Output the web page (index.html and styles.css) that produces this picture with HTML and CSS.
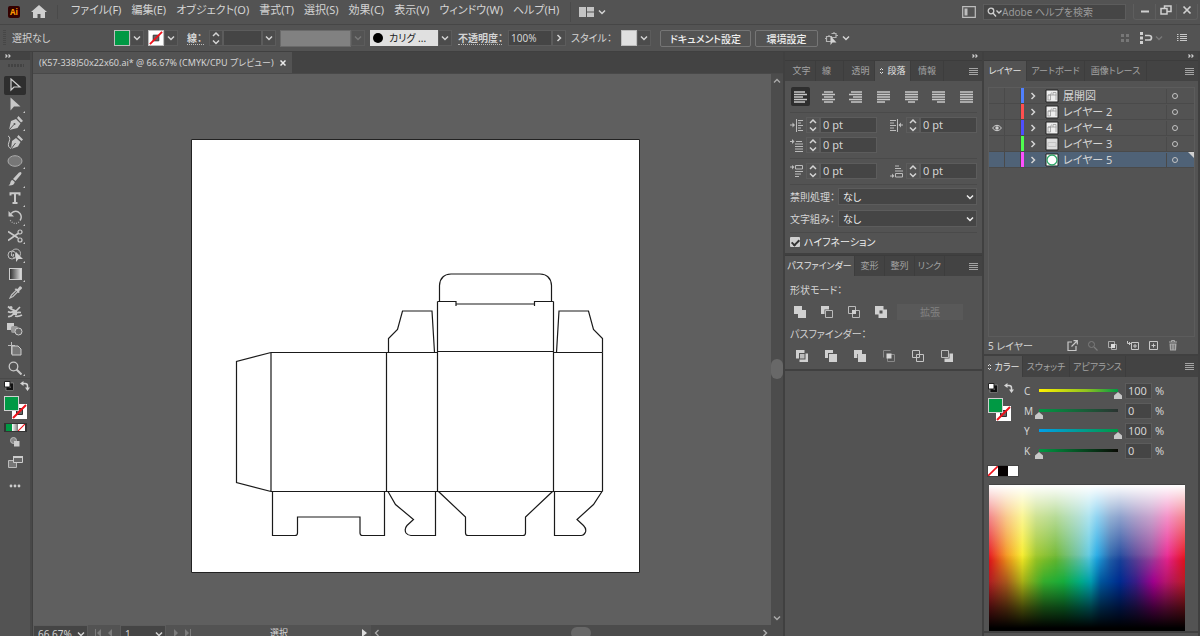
FILE: index.html
```
<!DOCTYPE html>
<html lang="ja">

<head>
    <meta charset="UTF-8">
    <meta name="viewport" content="width=device-width, initial-scale=1.0">
    <title>(K57-338)50x22x60.ai</title>
    <link rel="stylesheet" href="styles.css">
</head>

<body>
    <!-- shared icons -->
    <svg class="sprite" aria-hidden="true">
        <symbol id="down" viewBox="0 0 8 8"><path d="M1 2.5 4 5.5 7 2.5" fill="none" stroke="currentColor" stroke-width="1.5" /></symbol>
        <symbol id="right" viewBox="0 0 8 8"><path d="M2.5 1 5.5 4 2.5 7" fill="none" stroke="currentColor" stroke-width="1.5" /></symbol>
        <symbol id="left" viewBox="0 0 8 8"><path d="M5.5 1 2.5 4 5.5 7" fill="none" stroke="currentColor" stroke-width="1.3" /></symbol>
        <symbol id="up" viewBox="0 0 8 8"><path d="M1 5.5 4 2.5 7 5.5" fill="none" stroke="currentColor" stroke-width="1.3" /></symbol>
        <symbol id="spin" viewBox="0 0 8 14"><path d="M1 5 4 2 7 5M1 9.5 4 12.5 7 9.5" fill="none" stroke="currentColor" stroke-width="1.5" /></symbol>
        <symbol id="expand" viewBox="0 0 6 6"><path d="M.5 1.5 2 3 .5 4.500M3.500 1.500 5 3 3.500 4.500" fill="none" stroke="currentColor" stroke-width="1.2" /></symbol>
        <symbol id="menu" viewBox="0 0 9 9"><path d="M0 1.500h9M0 3.500h9M0 5.500h9M0 7.500h9" stroke="currentColor" stroke-width="1" /></symbol>
        <symbol id="updown" viewBox="0 0 5 8"><path d="M1 3 2.500 1.500 4 3M1 5 2.500 6.500 4 5" fill="none" stroke="currentColor" stroke-width="1" /></symbol>
        <symbol id="defaults" viewBox="0 0 10 10"><path d="M3.500 3.500h5v5h-5z" fill="none" stroke="#111" stroke-width="3" /><path d="M2 2h7.500v7.500H2z" fill="none" stroke="#aaa" stroke-width=".6" /><path d="M.5.5h5.500v5.500H.5z" fill="#fff" stroke="#222" /></symbol>
        <symbol id="swap" viewBox="0 0 10 10"><path d="M3 2.500h2q2.500 0 2.500 2.500v2" fill="none" stroke="currentColor" stroke-width="1.500" /><path d="M0 2.500 3.500 0v5zM7.500 10 5 6.500h5z" fill="currentColor" /></symbol>
        <symbol id="none" viewBox="0 0 15 15"><path d="M0 0h15v15H0z" fill="#fff" /><path d="M4.500 4.500h6v6h-6z" fill="#666" stroke="#333" /><path d="M1 14 14 1" stroke="#f0121b" stroke-width="2" /></symbol>
        <symbol id="none-small" viewBox="0 0 10 10"><path d="M0 0h10v10H0z" fill="#fff" /><path d="M0 10 10 0" stroke="#f0121b" stroke-width="1.600" /></symbol>
        <symbol id="box-thumb" viewBox="0 0 14 14"><path d="M1 1h12v12H1z" fill="#eee" stroke="#222" /><path d="M3 11V6h2.500v5M5.500 6l1-2.500M8 6V3.500h3V11M3 6h8.500M2.500 11h3" fill="none" stroke="#999" stroke-width=".8" /></symbol>
    </svg>

    <header class="menu-bar">
        <span class="app-logo">Ai</span>
        <a href="#" class="home" aria-label="ホーム">
            <svg width="16" height="14" viewBox="0 0 16 14"><path d="M8 0 0 7h2v6h4.500V9h3v4H14V7h2z" fill="#cfcfcf" /></svg>
        </a>
        <nav class="menus">
            <a href="#">ファイル(F)</a>
            <a href="#">編集(E)</a>
            <a href="#">オブジェクト(O)</a>
            <a href="#">書式(T)</a>
            <a href="#">選択(S)</a>
            <a href="#">効果(C)</a>
            <a href="#">表示(V)</a>
            <a href="#">ウィンドウ(W)</a>
            <a href="#">ヘルプ(H)</a>
        </nav>
        <button class="icon-btn layout-btn" aria-label="ドキュメントレイアウト">
            <svg width="15" height="10" viewBox="0 0 15 10"><path d="M0 0h7v10H0zM8 0h7v4.500H8zM8 5.500h7V10H8z" fill="#c4c4c4" /></svg>
            <svg width="8" height="8"><use href="#down" /></svg>
        </button>
        <div class="menu-right">
            <button class="icon-btn" aria-label="ワークスペース">
                <svg width="14" height="12" viewBox="0 0 14 12"><path d="M.7.7h12.600v10.600H.7z" fill="none" stroke="#bdbdbd" stroke-width="1.200" /><path d="M2.500 2.500h3v7h-3z" fill="#bdbdbd" /></svg>
            </button>
            <label class="help-search">
                <svg width="15" height="10" viewBox="0 0 15 10"><circle cx="4" cy="4" r="2.800" fill="none" stroke="#cfcfcf" stroke-width="1.300" /><path d="m6 6 3 3.500M9.500 3.500 12 6l2.500-2.500" fill="none" stroke="#cfcfcf" stroke-width="1.400" /></svg>
                <input type="text" placeholder="Adobe ヘルプを検索" aria-label="Adobe ヘルプを検索">
            </label>
            <div class="window-buttons">
                <button aria-label="最小化"><svg width="10" height="10" viewBox="0 0 10 10"><path d="M1 6.500h8" stroke="currentColor" stroke-width="2" /></svg></button>
                <button aria-label="元に戻す"><svg width="12" height="10" viewBox="0 0 12 10"><path d="M1 3.500h6v5.500H1zM4.500 3V1H11v5.500H7.500" fill="none" stroke="currentColor" stroke-width="1.500" /></svg></button>
                <button aria-label="閉じる"><svg width="10" height="10" viewBox="0 0 10 10"><path d="m1.500 1.500 7 7m0-7-7 7" stroke="currentColor" stroke-width="1.700" /></svg></button>
            </div>
        </div>
    </header>

    <section class="control-bar">
        <span class="grip"></span>
        <span class="selection">選択なし</span>
        <div class="combo">
            <button class="swatch green" aria-label="塗り"></button>
            <button class="drop" aria-label="塗りを選択"><svg width="8" height="8"><use href="#down" /></svg></button>
        </div>
        <div class="combo stroke-combo">
            <button class="swatch" aria-label="線"><svg width="14" height="14"><use href="#none" /></svg></button>
            <button class="drop" aria-label="線を選択"><svg width="8" height="8"><use href="#down" /></svg></button>
        </div>
        <div class="combo weight">
            <label class="dotted" for="strokeWeight">線：</label>
            <button class="drop" aria-label="増減"><svg width="8" height="14"><use href="#spin" /></svg></button>
            <input type="text" id="strokeWeight">
            <button class="drop" aria-label="線幅"><svg width="8" height="8"><use href="#down" /></svg></button>
        </div>
        <div class="combo profile">
            <button class="profile-box" aria-label="可変線幅プロファイル" disabled></button>
            <button class="drop faded" aria-label="プロファイルを選択" disabled><svg width="8" height="8"><use href="#down" /></svg></button>
        </div>
        <div class="combo brush">
            <button class="brush-box"><i></i>カリグ ...</button>
            <button class="drop" aria-label="ブラシを選択"><svg width="8" height="8"><use href="#down" /></svg></button>
        </div>
        <div class="combo opacity">
            <label class="dotted" for="opacity">不透明度：</label>
            <input type="text" id="opacity" value="100%">
            <button class="drop" aria-label="不透明度を選択"><svg width="8" height="8"><use href="#right" /></svg></button>
        </div>
        <div class="combo graphic-style">
            <span class="style-label">スタイル：</span>
            <button class="swatch pale" aria-label="グラフィックスタイル"></button>
            <button class="drop" aria-label="スタイルを選択"><svg width="8" height="8"><use href="#down" /></svg></button>
        </div>
        <button class="outline-btn doc-setup">ドキュメント設定</button>
        <button class="outline-btn prefs">環境設定</button>
        <button class="icon-btn similar" aria-label="類似オブジェクトを選択">
            <svg width="13" height="13" viewBox="0 0 13 13"><path d="M1.500 4.500h5v5h-5zM7 1.500h4v4H7M0 6.500h1M4 3v1.500M9 0v1.500M11 3.500h2M6.500 1.500H8" fill="none" stroke="#b4b4b4" stroke-width="1.200" /><path d="M5.500 4v9l2-2.500h4z" fill="#d4d4d4" /></svg>
            <svg width="8" height="8"><use href="#down" /></svg>
        </button>
        <div class="control-right">
            <svg width="10" height="10" viewBox="0 0 10 10"><path d="M1 1h3v3H1zM6 1h3v3H6zM1 6h3v3H1zM6 6h3v3H6z" fill="#777" /></svg>
            <button class="icon-btn snap" aria-label="スナップ">
                <svg width="13" height="12" viewBox="0 0 13 12"><path d="M0 0h3v3H0zM0 4.500h3v3H0zM0 9h3v3H0z" fill="#d0d0d0" /><path d="M5 3.500h4q2.500 0 2.500 2.300T9 8H5" fill="none" stroke="#d0d0d0" stroke-width="1.700" /></svg>
                <svg class="faded" width="8" height="8"><use href="#down" /></svg>
            </button>
            <button class="icon-btn" aria-label="コントロールメニュー">
                <svg width="10" height="8" viewBox="0 0 10 8"><path d="M0 .5h1.500M3 .5h7M0 2.500h1.500M3 2.500h7M0 4.500h1.500M3 4.500h7M0 6.500h1.500M3 6.500h7" stroke="#c8c8c8" stroke-width="1" /></svg>
            </button>
        </div>
    </section>

    <main class="workspace">
        <aside class="tools">
            <div class="collapse tools-head"><svg width="6" height="6"><use href="#expand" /></svg></div>
            <span class="tools-grip"></span>
            <div class="tool-list">
                <button class="active" aria-label="選択ツール"><svg width="14" height="14" viewBox="0 0 14 14"><path d="M3 1v11l3-3h6z" fill="none" stroke="#d0d0d0" stroke-width="1.200" /></svg></button>
                <button class="more" aria-label="ダイレクト選択ツール"><svg width="14" height="14" viewBox="0 0 14 14"><path d="M2.500.5v13l3.500-4h6.500z" fill="#c8c8c8" /></svg></button>
                <button class="more" aria-label="ペンツール"><svg width="15" height="14" viewBox="0 0 15 14"><path d="M8 3 12.500 7.500 9.500 12 1 14l2-9zM9 2l1.500-2L15 5l-2 1.500z" fill="#c8c8c8" /><path d="m1 14 5-5.500" stroke="#535353" /><circle cx="6.500" cy="8" r="1" fill="#535353" /></svg></button>
                <button aria-label="曲線ツール"><svg width="16" height="14" viewBox="0 0 16 14"><path d="m9 3 4.500 4-2.500 4.500L4 14l1-8zM10 2l1.500-2L16 4.500 14.500 6z" fill="#c8c8c8" /><path d="m4 14 4.500-6" stroke="#535353" /><path d="M1 1q3 1 1 6-2 5 2 6.500" fill="none" stroke="#c8c8c8" /></svg></button>
                <button class="more" aria-label="楕円形ツール"><svg width="16" height="12" viewBox="0 0 16 12"><ellipse cx="8" cy="6" rx="7" ry="5.300" fill="#777" stroke="#aaa" /></svg></button>
                <button class="more" aria-label="ブラシツール"><svg width="14" height="14" viewBox="0 0 14 14"><path d="M13 0q1 1 0 2.500L7.500 9 5 7l6-6.500zM4.500 8l2.300 2Q6 14 .5 13.500 2.500 12 2.500 10q.5-2 2-2z" fill="#c8c8c8" /></svg></button>
                <button class="more" aria-label="文字ツール"><svg width="12" height="12" viewBox="0 0 12 12"><path d="M1.500 3.500V1.200h9v2.300M6 1v10M3.500 11h5" fill="none" stroke="#c8c8c8" stroke-width="2" /></svg></button>
                <button class="more" aria-label="回転ツール"><svg width="15" height="14" viewBox="0 0 15 14"><path d="M3 3.500Q8-1 12 3.500q2.500 3.500 0 7" fill="none" stroke="#c8c8c8" stroke-width="1.400" /><path d="M.5 1v5.500H6z" fill="#c8c8c8" /><path d="M11 12q-5 3.500-9-2" fill="none" stroke="#aaa" stroke-width="1.200" stroke-dasharray="1 1.300" /></svg></button>
                <button class="more" aria-label="はさみツール"><svg width="15" height="14" viewBox="0 0 15 14"><path d="M0 2.500 10 9M0 11.500 10 4.500" stroke="#c8c8c8" stroke-width="1.600" /><circle cx="12" cy="3" r="2" fill="none" stroke="#c8c8c8" stroke-width="1.200" /><circle cx="12" cy="11" r="2" fill="none" stroke="#c8c8c8" stroke-width="1.200" /></svg></button>
                <button class="more" aria-label="シェイプ形成ツール"><svg width="16" height="14" viewBox="0 0 16 14"><circle cx="5" cy="7" r="4" fill="none" stroke="#bbb" /><circle cx="9" cy="5.500" r="4.500" fill="none" stroke="#bbb" /><path d="M4 7h5" stroke="#bbb" stroke-width="2" stroke-dasharray="1 1" /><path d="M9 4v10l2.500-3H16z" fill="#d0d0d0" /></svg></button>
                <button class="more" aria-label="グラデーションツール"><span class="gradient-icon"></span></button>
                <button aria-label="スポイトツール"><svg width="13" height="13" viewBox="0 0 13 13"><path d="M2.500 9 8 3.500 9.500 5 4 10.500 1 12z" fill="none" stroke="#c0c0c0" stroke-width="1.200" /><path d="M7 2.500 8.500 3l2-2.500q1-.5 2 .5t0 2l-2.300 2 .3 1.500-1 .5-4-4z" fill="#c8c8c8" /></svg></button>
                <button aria-label="パペットワープツール"><svg width="16" height="13" viewBox="0 0 16 13"><path d="M1 1.500 4 4l5 2 4-4M1 6.500q3 2 7-1M1 11.500q3 .5 5-2t8-2M8 11q3 1 7-1" fill="none" stroke="#c8c8c8" stroke-width="1.700" /><circle cx="4" cy="2.500" r="1.500" fill="#c8c8c8" /><path d="M5 6h5v4H6z" fill="#c8c8c8" /></svg></button>
                <button aria-label="ブレンドツール"><svg width="16" height="13" viewBox="0 0 16 13"><path d="M0 0h7v7H0z" fill="#ccc" /><rect x="4" y="3" width="7" height="7" rx="2" fill="#999" /><circle cx="11.500" cy="8.500" r="3.500" fill="#666" stroke="#ccc" /></svg></button>
                <button aria-label="アートボードツール"><svg width="15" height="14" viewBox="0 0 15 14"><path d="M0 3.500h7M3.500 0v12" stroke="#bbb" /><path d="M4 4h6l3 3v6H4z" fill="#777" stroke="#ccc" /></svg></button>
                <button class="more" aria-label="ズームツール"><svg width="14" height="14" viewBox="0 0 14 14"><circle cx="5.500" cy="5.500" r="4.300" fill="none" stroke="#c8c8c8" stroke-width="1.300" /><path d="m8.500 8.500 5 5" stroke="#c8c8c8" stroke-width="2" /></svg></button>
            </div>
            <div class="paint">
                <div class="paint-top">
                    <svg width="10" height="10"><use href="#defaults" /></svg>
                    <svg width="10" height="10"><use href="#swap" /></svg>
                </div>
                <div class="fill-stroke">
                    <svg class="fs-stroke" width="15" height="15"><use href="#none" /></svg>
                    <span class="fs-fill"></span>
                </div>
            </div>
            <div class="paint-modes"><span class="m-color"></span><span class="m-grad"></span><svg width="7" height="7"><use href="#none-small" /></svg></div>
            <div class="tool-foot">
                <svg width="10" height="10" viewBox="0 0 10 10"><circle cx="3.500" cy="3.500" r="3" fill="#888" stroke="#bbb" /><path d="M4 4h5.500v5.500H4z" fill="#ccc" /></svg>
                <svg width="15" height="12" viewBox="0 0 15 12"><path d="M.5 4.500h8v7h-8z" fill="#777" stroke="#bbb" /><path d="M5.500.5h9v6h-9z" fill="#666" stroke="#ccc" /><path d="M5 1h10" stroke="#ccc" stroke-width="2" /></svg>
                <svg width="12" height="4" viewBox="0 0 12 4"><circle cx="2" cy="2" r="1.400" fill="#ccc" /><circle cx="6" cy="2" r="1.400" fill="#ccc" /><circle cx="10" cy="2" r="1.400" fill="#ccc" /></svg>
            </div>
        </aside>

        <section class="document">
            <div class="doc-tabs">
                <div class="doc-tab">
                    <span>(K57-338)50x22x60.ai* @ 66.67% (CMYK/CPU プレビュー)</span>
                    <button aria-label="閉じる"><svg width="6" height="6" viewBox="0 0 6 6"><path d="m.5.5 5 5m0-5-5 5" stroke="#ececec" stroke-width="1.500" /></svg></button>
                </div>
            </div>
            <div class="view">
                <div class="canvas">
                    <svg class="artboard" width="449" height="434" viewBox="191 139 449 434">
                        <path d="M191.500 139.500h448v433h-448z" fill="#fff" stroke="#222" />
                        <g fill="none" stroke="#1a1a1a" stroke-width="1.200">
                            <path d="M271 352.500 236.500 361.500V482.500L271 491.500M271 352.500V491.500M386.500 352.500V491.500M437.500 301.500V491.500M553.500 301.500V491.500M602.500 352.500V491.500" />
                            <path d="M271 352.500H437.500M437.500 351.500H553.500M553.500 352.500H602.500M271 491.500H602.500" />
                            <path d="M388.500 352.500V338.500L397.500 329.500 402.500 311H432L434.500 352.500M556.500 352.500 559 311H588.500L593.500 329.500 602.500 338.500V352.500" />
                            <path d="M439.500 301.500V285.500Q440 274.500 451 274H540Q551 274.500 551.500 285.500V301.500M437.500 301.500H456V306M456 304H534.500M534.500 306V301.500H553.500" />
                            <path d="M272.500 491.500V535.500H295Q297.500 535.500 297.500 533V517H360V533Q360 535.500 362.500 535.500H384.500V491.500" />
                            <path d="M388 491.500 395.500 504.500 413.500 519.500 407 525.500Q404 529 406 533 408 535.500 411 535.500H435.500V491.500" />
                            <path d="M438.500 491.500 465.500 517V533Q465.500 535.500 468 535.500H523Q525.500 535.500 525.500 533V517L552.500 491.500" />
                            <path d="M554.500 491.500V535.500H581Q584 535.500 585.500 532 586.500 528.500 583.500 525.500L577 519.500 593.500 504.500 602 491.500" />
                        </g>
                    </svg>
                </div>
                <div class="v-scroll">
                    <svg width="8" height="8"><use href="#up" /></svg>
                    <span class="v-thumb"></span>
                    <svg width="8" height="8"><use href="#down" /></svg>
                </div>
            </div>
            <footer class="status">
                <div class="status-row">
                    <span class="select zoom-level"><select aria-label="ズーム"><option>66.67%</option></select><svg width="8" height="8"><use href="#down" /></svg></span>
                    <svg class="nav-icon" width="20" height="8" viewBox="0 0 20 8"><path d="M1 0h1v8H1zM7 0v8L3 4zM18 0v8l-4-4z" fill="#7c7c7c" /></svg>
                    <span class="select page-no"><select aria-label="アートボード"><option>1</option></select><svg width="8" height="8"><use href="#down" /></svg></span>
                    <svg class="nav-icon" width="20" height="8" viewBox="0 0 20 8"><path d="M2 0v8l4-4zM13 0v8l4-4zM18 0h1v8h-1z" fill="#7c7c7c" /></svg>
                    <span class="tool-name">選択</span>
                    <svg class="play" width="5" height="8" viewBox="0 0 5 8"><path d="M0 0v8l5-4z" fill="#ddd" /></svg>
                    <div class="h-scroll">
                        <svg width="8" height="8"><use href="#left" /></svg>
                        <span class="h-thumb"></span>
                        <svg width="8" height="8"><use href="#right" /></svg>
                    </div>
                </div>
            </footer>
        </section>

        <aside class="dock dock-left">
            <div class="collapse"><svg width="6" height="6"><use href="#expand" /></svg></div>
            <section class="panel">
                <div class="tabs">
                    <button class="t-char">文字</button>
                    <button class="t-line">線</button>
                    <button class="t-opacity">透明</button>
                    <button class="on t-para"><svg width="5" height="8"><use href="#updown" /></svg>段落</button>
                    <button class="t-info">情報</button>
                    <button class="panel-menu" aria-label="メニュー"><svg width="9" height="9"><use href="#menu" /></svg></button>
                </div>
                <div class="para-body">
                    <div class="aligns">
                        <button class="on" aria-label="左揃え"><svg width="13" height="12" viewBox="0 0 13 12"><path d="M0 1h11M0 3.500h13M0 6h9M0 8.500h13M0 11h11" /></svg></button>
                        <button aria-label="中央揃え"><svg width="13" height="12" viewBox="0 0 13 12"><path d="M2 1h9M0 3.500h13M2 6h9M0 8.500h13M2 11h9" /></svg></button>
                        <button aria-label="右揃え"><svg width="13" height="12" viewBox="0 0 13 12"><path d="M2 1h11M0 3.500h13M4 6h9M0 8.500h13M2 11h11" /></svg></button>
                        <button aria-label="均等配置(最終行左揃え)"><svg width="13" height="12" viewBox="0 0 13 12"><path d="M0 1h13M0 3.500h13M0 6h13M0 8.500h13M0 11h8" /></svg></button>
                        <button aria-label="均等配置(最終行中央揃え)"><svg width="13" height="12" viewBox="0 0 13 12"><path d="M0 1h13M0 3.500h13M0 6h13M0 8.500h13M3 11h7" /></svg></button>
                        <button aria-label="均等配置(最終行右揃え)"><svg width="13" height="12" viewBox="0 0 13 12"><path d="M0 1h13M0 3.500h13M0 6h13M0 8.500h13M5 11h8" /></svg></button>
                        <button aria-label="両端揃え"><svg width="13" height="12" viewBox="0 0 13 12"><path d="M0 1h13M0 3.500h13M0 6h13M0 8.500h13M0 11h13" /></svg></button>
                    </div>
                    <div class="indents">
                        <div class="field">
                            <svg width="13" height="13" viewBox="0 0 13 13"><path d="M0 6h4M6.500 0v13M8 1.500h5M8 4h3M8 6.500h5M8 9h3M8 11.500h5" /><path d="M2.500 3.500 5 6 2.500 8.500z" class="tip" /></svg>
                            <button aria-label="増減"><svg width="8" height="14"><use href="#spin" /></svg></button><input type="text" value="0 pt" aria-label="左インデント">
                        </div>
                        <div class="field">
                            <svg width="13" height="13" viewBox="0 0 13 13"><path d="M9 6h4M7.500 0v13M0 1.500h6M0 4h4M0 6.500h6M0 9h4M0 11.500h6" /><path d="M11 3.500 8.500 6 11 8.500z" class="tip" /></svg>
                            <button aria-label="増減"><svg width="8" height="14"><use href="#spin" /></svg></button><input type="text" value="0 pt" aria-label="右インデント">
                        </div>
                        <div class="field">
                            <svg width="13" height="13" viewBox="0 0 13 13"><path d="M0 2.500h3M6 2.500h6M5 5h8M5 7.500h8M5 10h8M5 12.500h8" /><path d="M2 0 4.500 2.500 2 5z" class="tip" /></svg>
                            <button aria-label="増減"><svg width="8" height="14"><use href="#spin" /></svg></button><input type="text" value="0 pt" aria-label="1行目左インデント">
                        </div>
                    </div>
                    <div class="indents">
                        <div class="field">
                            <svg width="13" height="13" viewBox="0 0 13 13"><path d="M0 2h3M5.500 .5h7v3.500h-7zM5 6.500h8M5 9h6M5 11.500h4" /><path d="M2 0 4.500 2 2 4.500z" class="tip" /></svg>
                            <button aria-label="増減"><svg width="8" height="14"><use href="#spin" /></svg></button><input type="text" value="0 pt" aria-label="段落前のアキ">
                        </div>
                        <div class="field">
                            <svg width="13" height="13" viewBox="0 0 13 13"><path d="M0 11h3M5.500 8.500h7v3.500h-7zM5 1h4M5 3.500h6M5 6h8" /><path d="M2 8.500 4.500 11 2 13z" class="tip" /></svg>
                            <button aria-label="増減"><svg width="8" height="14"><use href="#spin" /></svg></button><input type="text" value="0 pt" aria-label="段落後のアキ">
                        </div>
                    </div>
                    <div class="type-rules">
                        <label for="kinsoku">禁則処理：</label>
                        <span class="select"><select id="kinsoku"><option>なし</option></select><svg width="8" height="8"><use href="#down" /></svg></span>
                        <label for="mojikumi">文字組み：</label>
                        <span class="select"><select id="mojikumi"><option>なし</option></select><svg width="8" height="8"><use href="#down" /></svg></span>
                    </div>
                    <label class="hyphen"><input type="checkbox" checked>ハイフネーション</label>
                </div>
            </section>
            <section class="panel">
                <div class="tabs">
                    <button class="on t-path">パスファインダー</button>
                    <button>変形</button>
                    <button>整列</button>
                    <button>リンク</button>
                    <button class="panel-menu" aria-label="メニュー"><svg width="9" height="9"><use href="#menu" /></svg></button>
                </div>
                <div class="path-body">
                    <h3>形状モード：</h3>
                    <div class="shape-modes">
                        <button aria-label="合体"><svg width="12" height="12" viewBox="0 0 12 12"><path d="M0 0h8v4h4v8H4V8H0z" fill="#d0d0d0" /></svg></button>
                        <button aria-label="前面オブジェクトで型抜き"><svg width="12" height="12" viewBox="0 0 12 12"><path d="M0 0h8v3.500H3.500V8H0z" fill="#d0d0d0" /><path d="M4.500 4.500h7v7h-7z" fill="none" stroke="#bbb" /></svg></button>
                        <button aria-label="交差"><svg width="12" height="12" viewBox="0 0 12 12"><path d="M.5.5h7v7h-7zM4.500 4.500h7v7h-7z" fill="none" stroke="#bbb" /><path d="M4 4h4v4H4z" fill="#d0d0d0" /></svg></button>
                        <button aria-label="中マド"><svg width="12" height="12" viewBox="0 0 12 12"><path d="M0 0h8.500v3.500H12V12H3.500V8.500H0zM4.500 4.500v3h3v-3z" fill="#d0d0d0" fill-rule="evenodd" /></svg></button>
                        <button class="expand" disabled>拡張</button>
                    </div>
                    <h3>パスファインダー：</h3>
                    <div class="pathfinders">
                        <button aria-label="分割"><svg width="12" height="12" viewBox="0 0 12 12"><path d="M0 0h8.500v3H3v5.500H0zM9.500 3.500H12V12H3.500V9.500h6z" fill="#d0d0d0" /><path d="M4 4h4.500v4.500H4z" fill="#bbb" /></svg></button>
                        <button aria-label="刈り込み"><svg width="12" height="12" viewBox="0 0 12 12"><path d="M0 0h8v3H3v5H0zM4 4h8v8H4z" fill="#d0d0d0" /></svg></button>
                        <button aria-label="合流"><svg width="12" height="12" viewBox="0 0 12 12"><path d="M0 0h8v4h4v8H4V8H0z" fill="#d0d0d0" /><path d="M3.500 4v4" stroke="#777" /></svg></button>
                        <button aria-label="切り抜き"><svg width="12" height="12" viewBox="0 0 12 12"><path d="M.5 7.500v-7h7" fill="none" stroke="#888" /><path d="M4.500 4.500h7v7h-7z" fill="none" stroke="#888" /><path d="M3.500 3.500h5v5h-5z" fill="#d8d8d8" /></svg></button>
                        <button aria-label="アウトライン"><svg width="12" height="12" viewBox="0 0 12 12"><path d="M.5.5h7v7h-7zM4.500 4.500h7v7h-7z" fill="none" stroke="#c4c4c4" /></svg></button>
                        <button aria-label="背面オブジェクトで型抜き"><svg width="12" height="12" viewBox="0 0 12 12"><path d="M8.500 3.500H12V12H3.500V8.500h5z" fill="#d0d0d0" /><path d="M.5.5h7v7h-7z" fill="none" stroke="#bbb" /></svg></button>
                    </div>
                </div>
            </section>
        </aside>

        <aside class="dock dock-right">
            <div class="collapse"><svg width="6" height="6"><use href="#expand" /></svg></div>
            <section class="panel">
                <div class="tabs">
                    <button class="on t-layer">レイヤー</button>
                    <button class="t-board">アートボード</button>
                    <button class="t-trace">画像トレース</button>
                    <button class="panel-menu" aria-label="メニュー"><svg width="9" height="9"><use href="#menu" /></svg></button>
                </div>
                <div class="layer-body">
                    <ul class="layers">
                        <li>
                            <span class="eye"></span><span class="lock"></span><span class="bar blue"></span>
                            <svg class="twist" width="8" height="8"><use href="#right" /></svg>
                            <svg width="14" height="14"><use href="#box-thumb" /></svg>
                            <span class="name">展開図</span><span class="target"><i></i></span>
                        </li>
                        <li>
                            <span class="eye"></span><span class="lock"></span><span class="bar red"></span>
                            <svg class="twist" width="8" height="8"><use href="#right" /></svg>
                            <svg width="14" height="14"><use href="#box-thumb" /></svg>
                            <span class="name">レイヤー 2</span><span class="target"><i></i></span>
                        </li>
                        <li>
                            <span class="eye"><svg width="10" height="8" viewBox="0 0 10 8"><path d="M.5 4Q5-1.500 9.500 4 5 9.500.5 4z" fill="none" stroke="#d0d0d0" /><circle cx="5" cy="4" r="1.700" fill="#d0d0d0" /></svg></span><span class="lock"></span><span class="bar indigo"></span>
                            <svg class="twist" width="8" height="8"><use href="#right" /></svg>
                            <svg width="14" height="14"><use href="#box-thumb" /></svg>
                            <span class="name">レイヤー 4</span><span class="target"><i></i></span>
                        </li>
                        <li>
                            <span class="eye"></span><span class="lock"></span><span class="bar lime"></span>
                            <svg class="twist" width="8" height="8"><use href="#right" /></svg>
                            <svg width="14" height="14" viewBox="0 0 14 14"><path d="M1 1h12v12H1z" fill="#ddd" stroke="#222" /><path d="M3 5.500h8v4H3z" fill="none" stroke="#c4c4c4" /></svg>
                            <span class="name">レイヤー 3</span><span class="target"><i></i></span>
                        </li>
                        <li class="selected">
                            <span class="eye"></span><span class="lock"></span><span class="bar pink"></span>
                            <svg class="twist" width="8" height="8"><use href="#right" /></svg>
                            <svg width="14" height="14" viewBox="0 0 14 14"><path d="M1 1h12v12H1z" fill="#fff" stroke="#222" /><circle cx="7" cy="7" r="5" fill="none" stroke="#2da567" stroke-width="1.300" /></svg>
                            <span class="name">レイヤー 5</span><span class="target"><i></i></span>
                        </li>
                    </ul>
                    <div class="layer-foot">
                        <span>5 レイヤー</span>
                        <button aria-label="書き出し"><svg width="11" height="11" viewBox="0 0 11 11"><path d="M5 2H1v8.500h8V6M4.500 6.500 10 1M6.500.700H10.300V4.500" fill="none" stroke="#c8c8c8" stroke-width="1.200" /></svg></button>
                        <button aria-label="検索"><svg width="11" height="11" viewBox="0 0 11 11"><circle cx="4.500" cy="4.500" r="3" fill="none" stroke="#7c7c7c" /><path d="m7 7 3.500 3.500" stroke="#7c7c7c" stroke-width="1.300" /></svg></button>
                        <button aria-label="クリッピングマスク"><svg width="11" height="11" viewBox="0 0 11 11"><path d="M1.500 1.500h6v6h-6zM4.500 4.500h5v5h-5z" fill="none" stroke="#aaa" /><path d="M4 4h4v4H4z" fill="#ddd" /></svg></button>
                        <button aria-label="サブレイヤー"><svg width="12" height="11" viewBox="0 0 12 11"><path d="M4.500 2.500h7v7h-7zM8 4v4M6 6h4M.5 1v2.500h3M2 2 3.500 3.500 2 5" fill="none" stroke="#c8c8c8" /></svg></button>
                        <button aria-label="新規レイヤー"><svg width="11" height="11" viewBox="0 0 11 11"><path d="M1.500 1.500h8v8h-8zM5.500 3.500v4M3.500 5.500h4" fill="none" stroke="#c8c8c8" /></svg></button>
                        <button aria-label="削除"><svg width="10" height="11" viewBox="0 0 10 11"><path d="M1 2h8M3.500 2V.5h3V2" fill="none" stroke="#aaa" /><path d="M1.500 3.500h7l-.5 7H2z" fill="#aaa" /><path d="M3.800 4.500v5M6.200 4.500v5" stroke="#555" stroke-width=".8" /></svg></button>
                    </div>
                </div>
            </section>
            <section class="panel color-panel">
                <div class="tabs">
                    <button class="on t-color"><svg width="5" height="8"><use href="#updown" /></svg>カラー</button>
                    <button class="t-swatch">スウォッチ</button>
                    <button class="t-look">アピアランス</button>
                    <button class="panel-menu" aria-label="メニュー"><svg width="9" height="9"><use href="#menu" /></svg></button>
                </div>
                <div class="color-body">
                    <div class="paint">
                        <div class="paint-top">
                            <svg width="10" height="10"><use href="#defaults" /></svg>
                            <svg width="10" height="10"><use href="#swap" /></svg>
                        </div>
                        <div class="fill-stroke">
                            <svg class="fs-stroke" width="15" height="15"><use href="#none" /></svg>
                            <span class="fs-fill"></span>
                        </div>
                    </div>
                    <div class="sliders">
                        <div class="slider"><label for="c">C</label><input type="range" id="c" class="track-c" value="100"><input type="text" value="100" aria-label="C の値"><span>%</span></div>
                        <div class="slider"><label for="m">M</label><input type="range" id="m" class="track-m" value="0"><input type="text" value="0" aria-label="M の値"><span>%</span></div>
                        <div class="slider"><label for="y">Y</label><input type="range" id="y" class="track-y" value="100"><input type="text" value="100" aria-label="Y の値"><span>%</span></div>
                        <div class="slider"><label for="k">K</label><input type="range" id="k" class="track-k" value="0"><input type="text" value="0" aria-label="K の値"><span>%</span></div>
                    </div>
                </div>
                <div class="quick"><svg width="10" height="10"><use href="#none-small" /></svg><span class="q-black"></span><span class="q-white"></span></div>
                <div class="spectrum"></div>
            </section>
        </aside>
    </main>
</body>

</html>
```
FILE: styles.css
```
* {
    margin: 0;
    padding: 0;
    box-sizing: border-box;
}

body {
    display: flex;
    flex-direction: column;
    height: 100vh;
    overflow: hidden;
    background: #535353;
    color: #d4d4d4;
    font-family: "Noto Sans", "Noto Sans CJK JP", sans-serif;
    font-feature-settings: "palt";
    font-size: 10px;
    line-height: 16px;
    white-space: nowrap;
}

button,
input,
select {
    font: inherit;
    font-feature-settings: inherit;
    color: inherit;
    background: none;
    border: none;
    border-radius: 0;
    outline: none;
    appearance: none;
    min-width: 0;
}

a {
    color: inherit;
    text-decoration: none;
}

svg {
    display: block;
    flex: none;
}

ul {
    list-style: none;
}

h3 {
    font-size: 10px;
    font-weight: 400;
}

.sprite {
    position: absolute;
    width: 0;
    height: 0;
}

.faded {
    color: #777;
}

.icon-btn {
    display: flex;
    align-items: center;
}

/* menu bar */
.menu-bar {
    display: flex;
    align-items: center;
    flex: none;
    height: 25px;
    padding: 0 2px 1px 8px;
    border-bottom: 1px solid #464646;
}

.app-logo {
    width: 12px;
    height: 12px;
    border-radius: 2px;
    background: #330000;
    color: #ff9a00;
    font-size: 8px;
    font-weight: 700;
    line-height: 12px;
    text-align: center;
}

.home {
    margin-left: 11px;
    padding-right: 10px;
    border-right: 1px solid #4a4a4a;
}

.menus {
    display: flex;
    gap: 10px;
    padding: 0 11px 4px 13px;
    border-right: 1px solid #4a4a4a;
    font-size: 11px;
}

.layout-btn {
    gap: 4px;
    margin-left: 8px;
}

.menu-right {
    display: flex;
    align-items: center;
    gap: 7px;
    margin-left: auto;
}

.help-search {
    display: flex;
    align-items: center;
    width: 143px;
    height: 16px;
    padding: 0 3px;
    border: 1px solid #5c5c5c;
    background: #464646;
}

.help-search input {
    flex: 1;
}

.help-search input::placeholder {
    color: #9a9a9a;
}

.window-buttons {
    display: flex;
    align-self: flex-start;
    height: 16px;
    border: 1px solid #5e5e5e;
    border-top: none;
    border-radius: 0 0 3px 3px;
    color: #d0d0d0;
}

.window-buttons button {
    display: grid;
    place-items: center;
    width: 21px;
    padding-bottom: 3px;
}

.window-buttons button + button {
    border-left: 1px solid #5e5e5e;
}

/* control bar */
.control-bar {
    display: flex;
    align-items: center;
    flex: none;
    height: 27px;
    padding: 0 13px 0 3px;
    border-bottom: 1px solid #404040;
}

.grip {
    width: 3px;
    height: 16px;
    background: repeating-linear-gradient(#474747 0 1px, transparent 1px 2px);
}

.selection {
    width: 108px;
    padding-left: 6px;
}

.combo {
    display: flex;
    align-items: center;
    height: 16px;
}

.combo input {
    height: 16px;
    background: #454545;
    border: 1px solid #5c5c5c;
    padding: 0 2px;
}

.swatch {
    display: grid;
    place-items: center;
    width: 16px;
    height: 16px;
    border: 1px solid #bdbdbd;
    background: #fff;
}

.swatch.green {
    background: #009944;
}

.swatch.pale {
    background: #e0e0e0;
}

.drop {
    display: grid;
    place-items: center;
    width: 14px;
    height: 16px;
    border: 1px solid #5c5c5c;
    background: #4c4c4c;
}

.drop.faded {
    background: none;
}

.dotted {
    border-bottom: 1px dotted #bbb;
    line-height: 12px;
    font-weight: 700;
}

.stroke-combo {
    margin-left: 4px;
}

.weight {
    margin-left: 9px;
}

.weight .dotted {
    width: 17px;
    margin-right: 5px;
}

.weight input {
    width: 39px;
}

.profile {
    margin-left: 4px;
}

.profile-box {
    width: 71px;
    height: 17px;
    background: #818181;
    border: 1px solid #6a6a6a;
}

.brush {
    margin-left: 5px;
}

.brush-box {
    display: flex;
    align-items: center;
    gap: 6px;
    width: 68px;
    height: 16px;
    padding-left: 3px;
    background: #e0e0e0;
    color: #222;
}

.brush-box i {
    width: 10px;
    height: 10px;
    border-radius: 50%;
    background: #000;
}

.opacity {
    margin-left: 6px;
}

.opacity .dotted {
    width: 44px;
    margin-right: 6px;
}

.opacity input {
    width: 44px;
}

.graphic-style {
    margin-left: 5px;
}

.style-label {
    width: 50px;
}

.outline-btn {
    height: 17px;
    border: 1px solid #757575;
    border-radius: 2px;
    color: #eee;
    font-weight: 500;
}

.doc-setup {
    width: 91px;
    margin-left: 9px;
}

.prefs {
    width: 63px;
    margin-left: 4px;
}

.similar {
    gap: 4px;
    margin-left: 7px;
}

.control-right {
    display: flex;
    align-items: center;
    gap: 14px;
    margin-left: auto;
}

.snap {
    gap: 2px;
    margin-left: -4px;
}

/* workspace */
.workspace {
    display: flex;
    flex: 1;
    min-height: 0;
    background: #404040;
}

.collapse {
    display: flex;
    align-items: center;
    justify-content: flex-end;
    flex: none;
    height: 8px;
    padding-right: 4px;
    background: #434343;
    color: #d0d0d0;
}

/* tool bar */
.tools {
    width: 32px;
    flex: none;
    margin-right: 1px;
    background: #535353;
    border-right: 2px solid #484848;
}

.tools-head {
    justify-content: flex-start;
    padding-left: 5px;
}

.tools-grip {
    display: block;
    width: 16px;
    height: 3px;
    margin: 4px 0 9px 8px;
    background: repeating-linear-gradient(90deg, #434343 0 2px, transparent 2px 3px);
}

.tool-list {
    display: flex;
    flex-direction: column;
    height: 303px;
    padding-bottom: 1px;
    border-bottom: 1px solid #4a4a4a;
}

.tool-list button {
    position: relative;
    display: grid;
    place-items: center;
    flex: 1;
    width: 22px;
    margin-left: 4px;
}

.tool-list .active {
    background: #2e2e2e;
    border-radius: 2px;
}

.more::after {
    content: "";
    position: absolute;
    right: 1px;
    bottom: 1px;
    border: 1px solid #c8c8c8;
    border-top-color: transparent;
    border-left-color: transparent;
}

.gradient-icon {
    width: 13px;
    height: 12px;
    border: 1px solid #ccc;
    background: linear-gradient(90deg, #333, #ddd);
}

.paint {
    width: 26px;
}

.tools .paint {
    margin: 2px 0 0 4px;
}

.paint-top {
    display: flex;
    justify-content: space-between;
    height: 15px;
}

.fill-stroke {
    position: relative;
    height: 23px;
}

.fs-fill {
    position: absolute;
    left: 0;
    top: 0;
    width: 15px;
    height: 15px;
    border: 1px solid #d0d0d0;
    background: #009944;
}

.fs-stroke {
    position: absolute;
    left: 8px;
    top: 8px;
}

.paint-modes {
    display: flex;
    justify-content: space-between;
    width: 23px;
    margin: 4px 0 0 4px;
    padding: 0 1px;
    border: 1px solid #333;
    background: #333;
}

.paint-modes span {
    width: 6px;
    height: 7px;
}

.m-color {
    background: #009944;
}

.m-grad {
    background: linear-gradient(90deg, #fff, #777);
}

.tool-foot {
    display: flex;
    flex-direction: column;
    align-items: center;
    gap: 9px;
    padding-top: 5px;
}

.tool-foot svg:last-child {
    margin-top: 7px;
}

/* document */
.document {
    display: flex;
    flex-direction: column;
    flex: 1;
    min-width: 0;
}

.doc-tabs {
    display: flex;
    flex: none;
    height: 22px;
    background: #434343;
    border-bottom: 1px solid #494949;
    font-size: 9px;
}

.doc-tab {
    display: flex;
    align-items: center;
    justify-content: space-between;
    width: 259px;
    padding: 0 6px;
    background: #535353;
}

.view {
    display: flex;
    flex: 1;
    min-height: 0;
}

.canvas {
    flex: 1;
    min-width: 0;
    padding: 65px 0 0 158px;
    background: #5f5f5f;
    overflow: hidden;
}

.v-scroll {
    display: flex;
    flex-direction: column;
    align-items: center;
    justify-content: space-between;
    width: 12px;
    padding: 3px 0;
    background: #4c4c4c;
    color: #aaa;
}

.v-thumb {
    width: 12px;
    height: 20px;
    margin-top: 38px;
    border-radius: 6px;
    background: #686868;
}

.status {
    flex: none;
    height: 11px;
    overflow: hidden;
    background: #535353;
}

.status-row {
    display: flex;
    align-items: center;
    height: 16px;
}

.nav-icon {
    margin: 0 6px;
}

.tool-name {
    width: 164px;
    padding-left: 72px;
    font-size: 9px;
}

.h-scroll {
    display: flex;
    align-items: center;
    justify-content: space-between;
    flex: 1;
    height: 16px;
    margin-left: 4px;
    padding: 0 14px 0 2px;
    background: #4c4c4c;
    color: #aaa;
}

.h-thumb {
    width: 20px;
    height: 12px;
    margin-left: 20px;
    border-radius: 6px;
    background: #686868;
}

.select {
    display: grid;
    align-items: center;
    height: 17px;
    border: 1px solid #5c5c5c;
    background: #454545;
}

.select select,
.select svg {
    grid-area: 1 / 1;
}

.select select {
    width: 100%;
    padding-left: 4px;
}

.select svg {
    justify-self: end;
    margin-right: 2px;
    pointer-events: none;
}

.zoom-level {
    width: 55px;
}

.page-no {
    width: 46px;
}

/* docks */
.dock {
    display: flex;
    flex-direction: column;
    flex: none;
    margin-left: 2px;
    background: #535353;
}

.dock-left {
    width: 197px;
}

.dock-right {
    width: 216px;
    border-right: 2px solid #404040;
}

.panel {
    border-bottom: 2px solid #404040;
}

.tabs {
    display: flex;
    height: 21px;
    background: #434343;
    border-top: 1px solid #3c3c3c;
}

.tabs button {
    display: flex;
    align-items: center;
    justify-content: center;
    gap: 3px;
    width: 30px;
    border-right: 1px solid #3d3d3d;
    color: #a4a4a4;
    font-size: 9px;
}

.tabs .on {
    background: #535353;
    color: #e4e4e4;
}

.tabs .panel-menu {
    width: 9px;
    margin: 0 4px 0 auto;
    border: none;
}

.tabs .t-char {
    width: 31px;
    padding-left: 3px;
}

.tabs .t-line {
    width: 28px;
    padding-right: 6px;
}

.tabs .t-opacity {
    width: 31px;
    padding-left: 3px;
}

.tabs .t-para {
    width: 36px;
}

.tabs .t-info {
    width: 33px;
}

.tabs .t-path {
    width: 70px;
}

.tabs .t-layer {
    width: 43px;
}

.tabs .t-board {
    width: 58px;
}

.tabs .t-trace {
    width: 62px;
}

.tabs .t-color {
    width: 39px;
}

.tabs .t-swatch {
    width: 47px;
}

.tabs .t-look {
    width: 56px;
}

/* paragraph panel */
.para-body {
    padding: 6px 5px 2px;
}

.aligns {
    display: flex;
    justify-content: space-between;
    padding: 0 1px 6px 1px;
}

.aligns button {
    display: grid;
    place-items: center;
    width: 19px;
    height: 19px;
}

.aligns .on {
    background: #2e2e2e;
    border-radius: 2px;
}

.aligns path {
    stroke: #c8c8c8;
    stroke-width: 1.5;
}

.indents {
    display: grid;
    grid-template-columns: 87px 87px;
    justify-content: space-between;
    gap: 4px;
    padding: 4px 0 5px;
    border-top: 1px solid #4a4a4a;
}

.field {
    display: flex;
    align-items: center;
    height: 16px;
}

.field > svg path {
    fill: none;
    stroke: #bbb;
}

.field > svg .tip {
    fill: #bbb;
    stroke: none;
}

.field button {
    display: grid;
    place-items: center;
    width: 14px;
    height: 16px;
    margin-left: 3px;
    border: 1px solid #5c5c5c;
}

.field input {
    flex: 1;
    width: 0;
    height: 16px;
    padding-left: 2px;
    border: 1px solid #5c5c5c;
    background: #454545;
    font-size: 11px;
}

.type-rules {
    display: grid;
    grid-template-columns: 48px 1fr;
    align-items: center;
    gap: 5px 0;
    padding: 3px 0 5px;
    border-top: 1px solid #4a4a4a;
    border-bottom: 1px solid #4a4a4a;
}

.type-rules .select {
    color: #eee;
}

.hyphen {
    display: flex;
    align-items: center;
    gap: 4px;
    height: 18px;
    color: #eee;
}

.hyphen input {
    display: grid;
    place-items: center;
    width: 10px;
    height: 10px;
    background: #d0d0d0;
    border-radius: 1px;
}

.hyphen input:checked::after {
    content: "";
    width: 3px;
    height: 6px;
    border: solid #333;
    border-width: 0 2px 2px 0;
    transform: rotate(45deg);
}

/* pathfinder panel */
.path-body {
    padding: 6px 6px 5px 5px;
}

.path-body button {
    display: grid;
    place-items: center;
    height: 16px;
}

.shape-modes {
    display: flex;
    align-items: center;
    gap: 15px;
    padding: 6px 0 6px 4px;
}

.path-body .expand {
    width: 66px;
    margin-left: -5px;
    background: #595959;
    color: #828282;
}

.pathfinders {
    display: flex;
    gap: 17px;
    padding: 6px 0 0 6px;
}

/* layers panel */
.layer-body {
    padding: 6px 3px 0 4px;
}

.layers {
    height: 250px;
    border: 1px solid #5c5c5c;
}

.layers li {
    position: relative;
    display: flex;
    align-items: center;
    height: 16px;
    border-bottom: 1px solid #4a4a4a;
    font-size: 11px;
    line-height: 14px;
}

.layers .selected {
    background: #4f6277;
}

.selected::after {
    content: "";
    position: absolute;
    right: 0;
    top: 0;
    border: 3px solid #d0d0d0;
    border-bottom-color: transparent;
    border-left-color: transparent;
}

.eye,
.lock {
    display: grid;
    place-items: center;
    width: 16px;
    height: 15px;
    border-right: 1px solid #4a4a4a;
}

.bar {
    width: 3px;
    height: 15px;
}

.blue {
    background: #4f80ff;
}

.red {
    background: #ff4f4f;
}

.indigo {
    background: #4f4fff;
}

.lime {
    background: #4fff4f;
}

.pink {
    background: #ff4fff;
}

.twist {
    margin: 0 8px 0 5px;
}

.name {
    flex: 1;
    padding-left: 4px;
}

.target {
    width: 28px;
    padding: 4px 0 4px 5px;
    border-left: 1px solid #4a4a4a;
}

.target i {
    display: block;
    width: 6px;
    height: 6px;
    border: 1px solid #c4c4c4;
    border-radius: 50%;
}

.layer-foot {
    display: flex;
    align-items: center;
    gap: 9px;
    height: 17px;
    padding-right: 17px;
}

.layer-foot span {
    flex: 1;
}

/* color panel */
.color-body {
    display: flex;
    gap: 10px;
    padding: 6px 0 0 4px;
}

.color-panel .tabs {
    border-top: none;
}

.sliders {
    display: grid;
    gap: 4px;
}

.slider {
    display: flex;
    align-items: center;
    height: 16px;
    font-size: 11px;
}

.slider label {
    width: 11px;
    font-size: 10px;
}

.slider input[type="range"] {
    width: 87px;
    height: 16px;
    margin-right: 3px;
    background-position: 4px 6px;
    background-size: 79px 3px;
    background-repeat: no-repeat;
}

.slider input::-webkit-slider-thumb {
    appearance: none;
    width: 8px;
    height: 7px;
    margin-top: 9px;
    background: #c8c8c8;
    clip-path: polygon(50% 0, 100% 50%, 100% 100%, 0 100%, 0 50%);
}

.slider input[type="text"] {
    width: 27px;
    height: 16px;
    margin-right: 3px;
    padding-left: 2px;
    border: 1px solid #5c5c5c;
    background: #454545;
}

.track-c {
    background-image: linear-gradient(90deg, #fff100, #8fc31f 60%, #009944);
}

.track-m {
    background-image: linear-gradient(90deg, #009944, #2b3331);
}

.track-y {
    background-image: linear-gradient(90deg, #00a0e9, #009944);
}

.track-k {
    background-image: linear-gradient(90deg, #009944, #0a0a04);
}

.quick {
    display: flex;
    width: 30px;
    margin: 7px 0 8px 4px;
    outline: 1px solid #444;
}

.quick span {
    flex: 1;
    height: 10px;
}

.q-black {
    background: #050000;
}

.q-white {
    background: #fff;
}

/* hue ramp: bright row on top, deep row faded in below, then white and black ends */
.spectrum {
    position: relative;
    height: 147px;
    margin: 0 13px 0 5px;
    border-top: 1px solid #444;
    background:
        linear-gradient(#fff, rgba(255, 255, 255, 0.5) 22%, rgba(255, 255, 255, 0) 52%),
        linear-gradient(90deg, #e60e18, #f39519 9%, #f7ec25 17%, #9cc524 24%, #6cb62d 34%, #68c0a8 46%, #5bc8e0 51%, #1fa8e4 55%, #2560a8 62%, #1c449a 67%, #5c4396 75%, #95459a 83%, #ea2390 91%, #e60e18);
}

.spectrum::after {
    content: "";
    position: absolute;
    inset: 0;
    background:
        linear-gradient(transparent 66%, rgba(0, 0, 0, 0.6) 84%, #000 98%),
        linear-gradient(90deg, #b01c22, #a85a1c 9%, #a8ae16 17%, #35ac2c 28%, #16ac3c 38%, #00aa88 47%, #009cae 52%, #00569c 57%, #002a8e 67%, #3a1c86 75%, #a0008c 84%, #b4146c 90%, #b81c24);
    mask-image: linear-gradient(transparent 48%, #000 66%);
}
```
